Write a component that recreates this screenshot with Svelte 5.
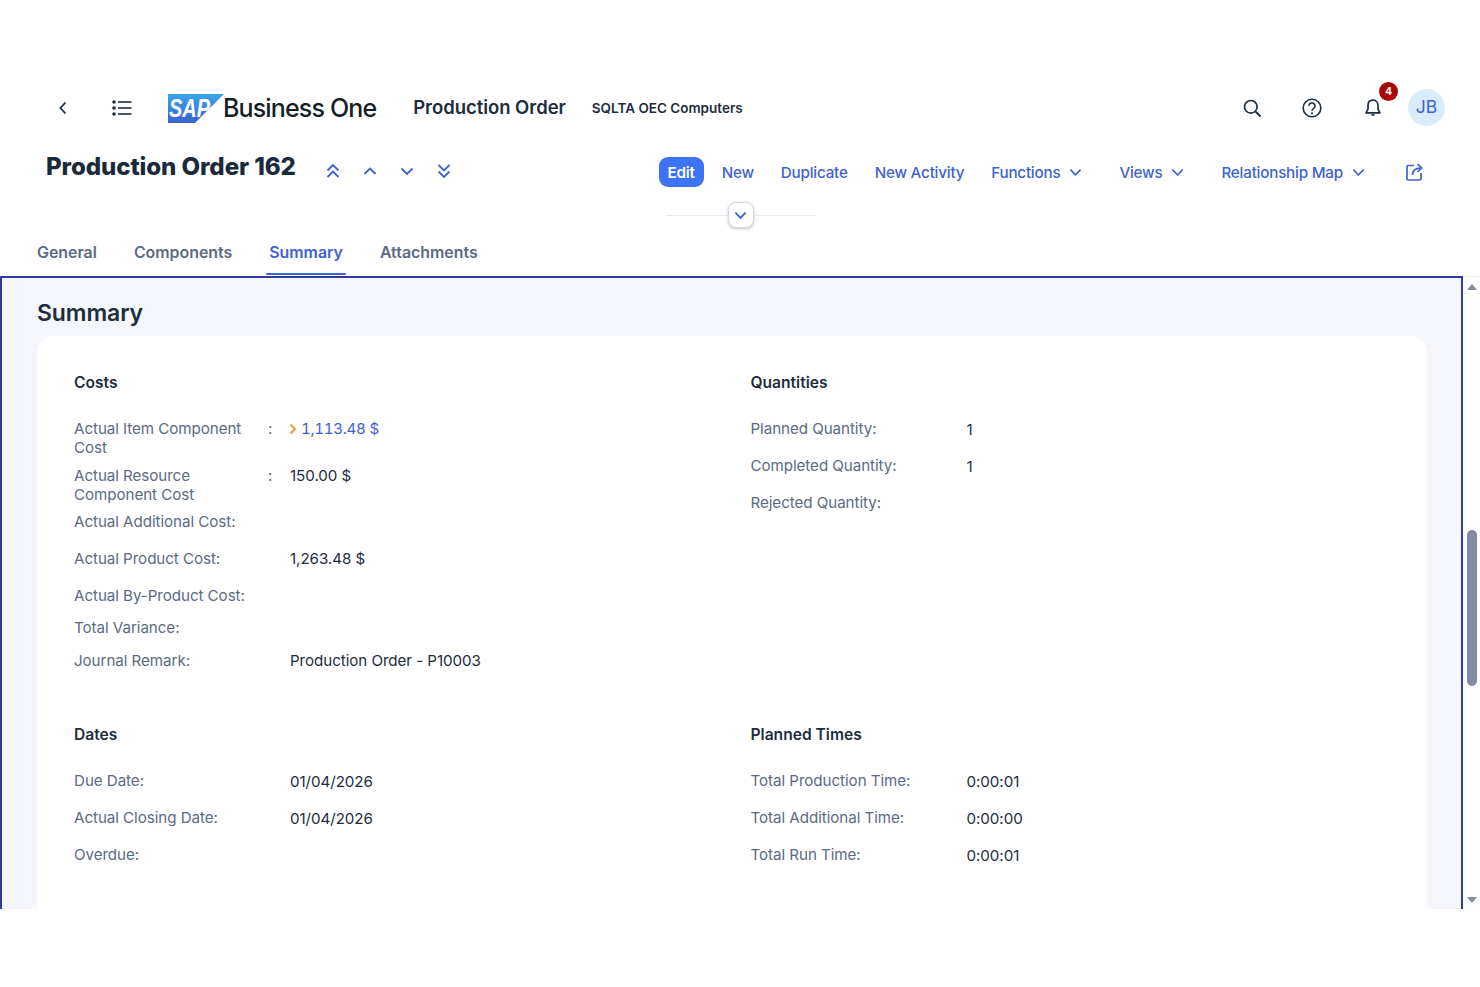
<script>
  const tabs = ['General', 'Components', 'Summary', 'Attachments'];
  const actions = [
    { t: 'New', m: false }, { t: 'Duplicate', m: false }, { t: 'New Activity', m: false },
    { t: 'Functions', m: true }, { t: 'Views', m: true }, { t: 'Relationship Map', m: true }
  ];
  const costs = [
    { l: 'Actual Item Component Cost', c: true, v: '1,113.48 $', link: true, h: 'r47' },
    { l: 'Actual Resource Component Cost', c: true, v: '150.00 $', h: 'r46' },
    { l: 'Actual Additional Cost:', v: '', h: 'r37' },
    { l: 'Actual Product Cost:', v: '1,263.48 $', h: 'r37' },
    { l: 'Actual By-Product Cost:', v: '', h: 'r32' },
    { l: 'Total Variance:', v: '', h: 'r33' },
    { l: 'Journal Remark:', v: 'Production Order - P10003', h: 'r37' }
  ];
  const quantities = [
    { l: 'Planned Quantity:', v: '1' }, { l: 'Completed Quantity:', v: '1' }, { l: 'Rejected Quantity:', v: '' }
  ];
  const dates = [
    { l: 'Due Date:', v: '01/04/2026' }, { l: 'Actual Closing Date:', v: '01/04/2026' }, { l: 'Overdue:', v: '' }
  ];
  const times = [
    { l: 'Total Production Time:', v: '0:00:01' }, { l: 'Total Additional Time:', v: '0:00:00' }, { l: 'Total Run Time:', v: '0:00:01' }
  ];
</script>

{#snippet field(r)}
  <div class="row {r.h ?? 'r37'}">
    <span class="lab">{r.l}</span>
    <span class="colon">{r.c ? ':' : ''}</span>
    {#if r.link}
      <span class="val link"><svg class="go" viewBox="0 0 8 12" width="8" height="12"><path d="M1.500 1.500 6 6l-4.500 4.500" fill="none" stroke="#e09a3e" stroke-width="1.800"/></svg>{r.v}</span>
    {:else}
      <span class="val">{r.v}</span>
    {/if}
  </div>
{/snippet}

{#snippet chev()}
  <svg class="chev" viewBox="0 0 14 9" width="13" height="9"><path d="M1.500 1.500 7 7l5.500-5.500" fill="none" stroke="currentColor" stroke-width="1.800"/></svg>
{/snippet}

<div class="page">
  <header class="top">
    <svg class="ic back" viewBox="0 0 12 16" width="12" height="16"><path d="M8.500 2.500 3.500 8l5 5.500" fill="none" stroke="#1d2d3e" stroke-width="1.800"/></svg>
    <svg class="ic list" viewBox="0 0 20 16" width="20" height="16"><g fill="#1d2d3e"><circle cx="2" cy="2" r="1.800"/><circle cx="2" cy="8" r="1.800"/><circle cx="2" cy="14" r="1.800"/><rect x="6" y="1.200" width="13.500" height="1.600"/><rect x="6" y="7.200" width="13.500" height="1.600"/><rect x="6" y="13.200" width="13.500" height="1.600"/></g></svg>
    <svg class="logo" viewBox="0 0 56 29" width="56" height="29">
      <defs><linearGradient id="sapg" x1="0" y1="0" x2="0" y2="1"><stop offset="0" stop-color="#38a6ec"/><stop offset="1" stop-color="#3a62cc"/></linearGradient></defs>
      <polygon points="0,0 56,0 27,29 0,29" fill="url(#sapg)"/>
      <text x="1" y="23" class="saptxt" textLength="41" lengthAdjust="spacingAndGlyphs">SAP</text>
    </svg>
    <span class="brand">Business One</span>
    <span class="mod">Production Order</span>
    <span class="co">SQLTA OEC Computers</span>
    <div class="right">
      <svg viewBox="0 0 20 20" width="20" height="20"><circle cx="8.800" cy="8.800" r="6.300" fill="none" stroke="#1d2d3e" stroke-width="1.700"/><path d="m13.500 13.500 5 5" stroke="#1d2d3e" stroke-width="1.900"/></svg>
      <svg viewBox="0 0 20 20" width="20" height="20"><circle cx="10" cy="10" r="8.800" fill="none" stroke="#1d2d3e" stroke-width="1.600"/><path d="M7 7.800a3 3 0 1 1 4.700 2.500c-1.100.7-1.700 1.200-1.700 2.400" fill="none" stroke="#1d2d3e" stroke-width="1.600"/><circle cx="10" cy="15.300" r="1.100" fill="#1d2d3e"/></svg>
      <div class="bell">
        <svg viewBox="0 0 20 20" width="20" height="20"><path d="M10 2.200c-3.200 0-5 2.300-5 5.300v3.600L3 14.800h14l-2-3.700V7.500c0-3-1.800-5.300-5-5.300Z" fill="none" stroke="#1d2d3e" stroke-width="1.700" stroke-linejoin="round"/><path d="M7.800 16.300a2.300 2.300 0 0 0 4.400 0Z" fill="#1d2d3e"/></svg>
        <span class="badge">4</span>
      </div>
      <span class="avatar">JB</span>
    </div>
  </header>

  <div class="titlerow">
    <h1>Production Order 162</h1>
    <div class="nav">
      <svg viewBox="0 0 14 16" width="14" height="16"><path d="M1.500 7.500 7 2l5.500 5.500M1.500 14 7 8.500l5.500 5.500" fill="none" stroke="#3f62d0" stroke-width="1.800"/></svg>
      <svg viewBox="0 0 14 16" width="14" height="16"><path d="M1.500 11 7 5.500l5.500 5.500" fill="none" stroke="#3f62d0" stroke-width="1.800"/></svg>
      <svg viewBox="0 0 14 16" width="14" height="16"><path d="M1.500 5.500 7 11l5.500-5.500" fill="none" stroke="#3f62d0" stroke-width="1.800"/></svg>
      <svg viewBox="0 0 14 16" width="14" height="16"><path d="M1.500 2 7 7.500 12.500 2M1.500 8.500 7 14l5.500-5.500" fill="none" stroke="#3f62d0" stroke-width="1.800"/></svg>
    </div>
    <div class="actions">
      <span class="edit">Edit</span>
      {#each actions as a}
        <span class="act" class:menu={a.m}>{a.t}{#if a.m}{@render chev()}{/if}</span>
      {/each}
      <svg class="share" viewBox="0 0 20 20" width="20" height="20"><path d="M9 3.500H3.200a1.200 1.200 0 0 0-1.200 1.200v12.100c0 .7.500 1.200 1.200 1.200h11.600c.7 0 1.200-.5 1.200-1.200V11" fill="none" stroke="#3f62d0" stroke-width="1.700"/><path d="M7.500 13c.3-4.500 3-6.800 7.500-6.800M12.500 2.200 16.700 6l-4.200 4" fill="none" stroke="#3f62d0" stroke-width="1.700"/></svg>
    </div>
  </div>

  <div class="collapse">
    <span class="line"></span>
    <span class="cbtn"><svg viewBox="0 0 14 9" width="13" height="9"><path d="M1.500 1.500 7 7l5.500-5.500" fill="none" stroke="#3f62d0" stroke-width="2"/></svg></span>
    <span class="line"></span>
  </div>

  <nav class="tabs">
    {#each tabs as t}
      <span class="tab" class:on={t === 'Summary'}>{t}</span>
    {/each}
  </nav>

  <div class="body">
    <main class="frame">
      <h2>Summary</h2>
      <section class="card">
        <div class="col costs">
          <h3>Costs</h3>
          {#each costs as r}{@render field(r)}{/each}
        </div>
        <div class="col">
          <h3>Quantities</h3>
          {#each quantities as r}{@render field(r)}{/each}
        </div>
        <div class="col second">
          <h3>Dates</h3>
          {#each dates as r}{@render field(r)}{/each}
        </div>
        <div class="col second">
          <h3>Planned Times</h3>
          {#each times as r}{@render field(r)}{/each}
        </div>
      </section>
    </main>
    <aside class="sb">
      <span class="up"></span>
      <span class="thumb"></span>
      <span class="down"></span>
    </aside>
  </div>
</div>

<style>
  :global(body) { margin: 0; background: #fff; }
  .page { width: 1480px; height: 987px; overflow: hidden; padding-top: 80px; box-sizing: border-box; font-family: Inter, "Noto Sans", sans-serif; color: #1d2d3e; }
  .top { height: 56px; display: flex; align-items: center; padding-left: 57px; padding-right: 35px; }
  .ic { flex: none; }
  .list { margin-left: 43px; }
  .logo { margin-left: 36px; flex: none; }
  .saptxt { font: italic 800 25px "Liberation Sans", sans-serif; fill: #fff; }
  .brand { font-size: 25px; font-weight: 500; letter-spacing: -.85px; margin-left: -1px; color: #131e29; }
  .mod { font-size: 18.500px; font-weight: 600; margin-left: 37px; letter-spacing: -.05px; padding-bottom: 2px; }
  .co { font-size: 13.500px; font-weight: 600; margin-left: 26px; }
  .right { margin-left: auto; display: flex; align-items: center; gap: 40px; }
  .bell { position: relative; display: flex; margin-right: -7px; margin-left: 1px; }
  .badge { position: absolute; left: 16px; top: -16px; width: 19px; height: 19px; border-radius: 50%; background: #aa0808; color: #fff; font-size: 10.500px; font-weight: 700; display: flex; align-items: center; justify-content: center; }
  .avatar { width: 37px; height: 37px; border-radius: 50%; background: #d9ecfb; color: #3f62d0; font-size: 17.500px; display: flex; align-items: center; justify-content: center; margin-left: -8px; margin-top: -1px; padding-bottom: 2px; box-sizing: border-box; }

  .titlerow { display: flex; align-items: center; height: 60px; padding-left: 46px; padding-right: 55px; margin-top: 6px; }
  h1 { margin: 0; font-size: 24.100px; font-weight: 800; color: #1a2a3c; letter-spacing: -.1px; position: relative; top: -6px; white-space: nowrap; }
  .nav { display: flex; gap: 23px; margin-left: 30px; position: relative; top: -1px; }
  .actions { margin-left: auto; display: flex; align-items: center; color: #3f62d0; font-size: 15.200px; font-weight: 500; letter-spacing: -.2px; }
  .edit { background: #3d73f5; color: #fff; font-weight: 600; height: 30px; width: 45px; display: flex; align-items: center; justify-content: center; border-radius: 9px; margin-right: 18px; }
  .act { margin-right: 27px; display: flex; align-items: center; white-space: nowrap; }
  .menu { margin-right: 37px; }
  .chev { margin-left: 9px; margin-top: 1px; }
  .share { margin-left: 3px; }

  .collapse { display: flex; align-items: center; justify-content: center; margin-top: -1px; height: 28px; margin-left: 1px; }
  .line { width: 62px; height: 1px; background: #e8e9ec; }
  .cbtn { width: 26px; height: 26px; box-sizing: border-box; border: 1px solid #d5d7dc; border-radius: 8px; background: #fff; box-shadow: 0 1px 3px rgba(40,50,70,.3); display: flex; align-items: center; justify-content: center; }

  .tabs { display: flex; height: 45px; padding-left: 37px; gap: 37px; box-sizing: border-box; margin-top: 2px; align-items: stretch; }
  .tab { font-size: 15.900px; font-weight: 600; color: #5b6a85; display: flex; align-items: center; padding-bottom: 3px; box-sizing: border-box; position: relative; }
  .on { color: #3f62d0; }
  .on::after { content: ""; position: absolute; left: -3px; right: -3px; bottom: 1px; height: 2px; background: #3f62d0; border-radius: 2px; }

  .body { display: flex; height: 633px; }
  .frame { width: 1463px; flex: none; box-sizing: border-box; border: 2px solid #2f3ba5; border-bottom: 0; background: #f5f6fb; padding: 0 35px; overflow: hidden; }
  h2 { margin: 0; font-size: 23px; font-weight: 600; line-height: 34px; padding-top: 18px; color: #1d2d3e; letter-spacing: -.1px; }
  .card { background: #fff; border-radius: 16px; margin-top: 6px; padding: 37px 0 0 37px; width: 1390px; box-sizing: border-box; height: 620px; display: grid; grid-template-columns: 676.500px 1fr; grid-template-rows: 317px auto; align-content: start; }
  h3 { margin: 0; font-size: 15.600px; font-weight: 600; line-height: 20px; height: 47px; color: #1d2d3e; }
  .second { padding-top: 35px; }
  .col { min-width: 0; }
  .row { display: grid; grid-template-columns: 194px 22px 1fr; align-items: start; font-size: 15.150px; line-height: 18.500px; letter-spacing: -.05px; }
  .r47 { height: 47px; }
  .r46 { height: 46px; }
  .r37 { height: 37px; }
  .r33 { height: 33px; }
  .r32 { height: 32px; }
  .lab { color: #5b6a85; }
  .colon { color: #5b6a85; }
  .val { color: #1d2d3e; padding-top: 1px; }
  .costs .val { padding-top: 0; }
  .link { color: #3f62d0; padding-top: 0; display: flex; align-items: center; font-variant-numeric: tabular-nums; letter-spacing: -.3px; }
  .go { margin-right: 4px; margin-left: -1px; flex: none; }

  .sb { width: 17px; flex: none; display: flex; flex-direction: column; align-items: center; position: relative; border-top: 1px solid #eceef1; box-sizing: border-box; }
  .up { width: 0; height: 0; border: 5px solid transparent; border-top: 0; border-bottom: 6px solid #7f8ba3; margin-top: 7px; margin-left: 1px; }
  .thumb { width: 10px; height: 156px; background: #7f8ba3; border-radius: 5px; margin-top: 240px; margin-left: 1px; }
  .down { width: 0; height: 0; border: 5px solid transparent; border-bottom: 0; border-top: 6px solid #7f8ba3; margin-top: auto; margin-bottom: 6px; margin-left: 1px; }
</style>
